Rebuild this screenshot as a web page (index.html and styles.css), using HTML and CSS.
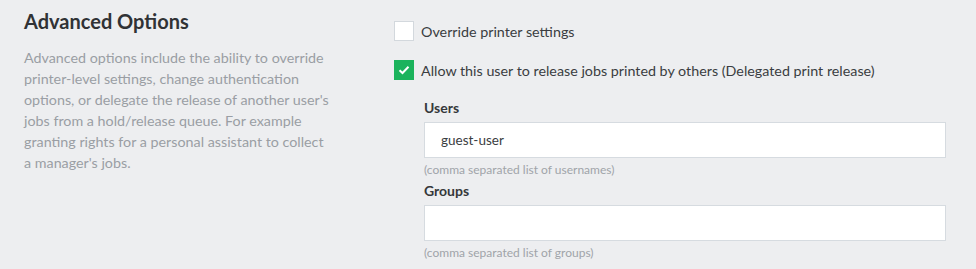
FILE: index.html
```html
<!DOCTYPE html>
<html lang="en">

<head>
    <meta charset="UTF-8">
    <title>Advanced Options</title>
    <link rel="stylesheet" href="styles.css">
</head>

<body>
    <div class="section">
        <div class="intro">
            <h2>Advanced Options</h2>
            <p>Advanced options include the ability to override printer-level settings, change authentication
                options, or delegate the release of another user's jobs from a hold/release queue. For example
                granting rights for a personal assistant to collect a manager's jobs.</p>
        </div>

        <div class="options">
            <label class="check">
                <span class="box"></span>
                Override printer settings
            </label>
            <label class="check">
                <span class="box checked">
                    <svg width="12" height="10" viewBox="0 0 12 10">
                        <path d="M1.5 5.2 L4.5 8 L10.5 1.8" fill="none" stroke="#fff" stroke-width="2" />
                    </svg>
                </span>
                Allow this user to release jobs printed by others (Delegated print release)
            </label>

            <div class="fields">
                <div class="field">
                    <div class="field-label">Users</div>
                    <input type="text" class="text-input" value="guest-user">
                    <div class="hint">(comma separated list of usernames)</div>
                </div>
                <div class="field">
                    <div class="field-label">Groups</div>
                    <input type="text" class="text-input" value="">
                    <div class="hint">(comma separated list of groups)</div>
                </div>
            </div>
        </div>
    </div>
</body>

</html>
```

FILE: styles.css
```css
body {
    margin: 0;
    background: #edeef0;
    font-family: Lato, "Open Sans", sans-serif;
    color: #3a3d41;
}

.section {
    display: flex;
    padding: 8px 30px 0 24px;
}

.intro {
    width: 307px;
    flex-shrink: 0;
}

.intro h2 {
    margin: 0;
    font-size: 20px;
    font-weight: 700;
    line-height: 26px;
    color: #303235;
}

.intro p {
    margin: 13px 0 0;
    font-size: 14.3px;
    line-height: 21px;
    color: #9a9ea4;
}

.options {
    flex: 1;
    margin-left: 63px;
    padding-top: 13px;
}

.check {
    display: flex;
    align-items: center;
    gap: 7px;
    height: 20px;
    margin-bottom: 19px;
    font-size: 14.3px;
    color: #3a3d41;
}

.box {
    width: 18px;
    height: 18px;
    border: 1px solid #d3d8dd;
    background: #fff;
    display: flex;
    align-items: center;
    justify-content: center;
}

.box.checked {
    background: #1bb35c;
    border-color: #1bb35c;
}

.fields {
    margin-left: 30px;
    margin-top: 2px;
}

.field-label {
    font-size: 14px;
    font-weight: 700;
    line-height: 18px;
    color: #35383b;
    margin-bottom: 5px;
}

.text-input {
    display: block;
    box-sizing: border-box;
    width: 100%;
    height: 36px;
    margin: 0;
    border: 1px solid #d6dbe0;
    background: #fff;
    padding: 0 16px;
    font-family: inherit;
    font-size: 13.5px;
    color: #3a3d41;
    outline: none;
}

.hint {
    font-size: 12px;
    line-height: 16px;
    color: #a0a4a9;
    margin-top: 4px;
    margin-bottom: 4px;
}
```
